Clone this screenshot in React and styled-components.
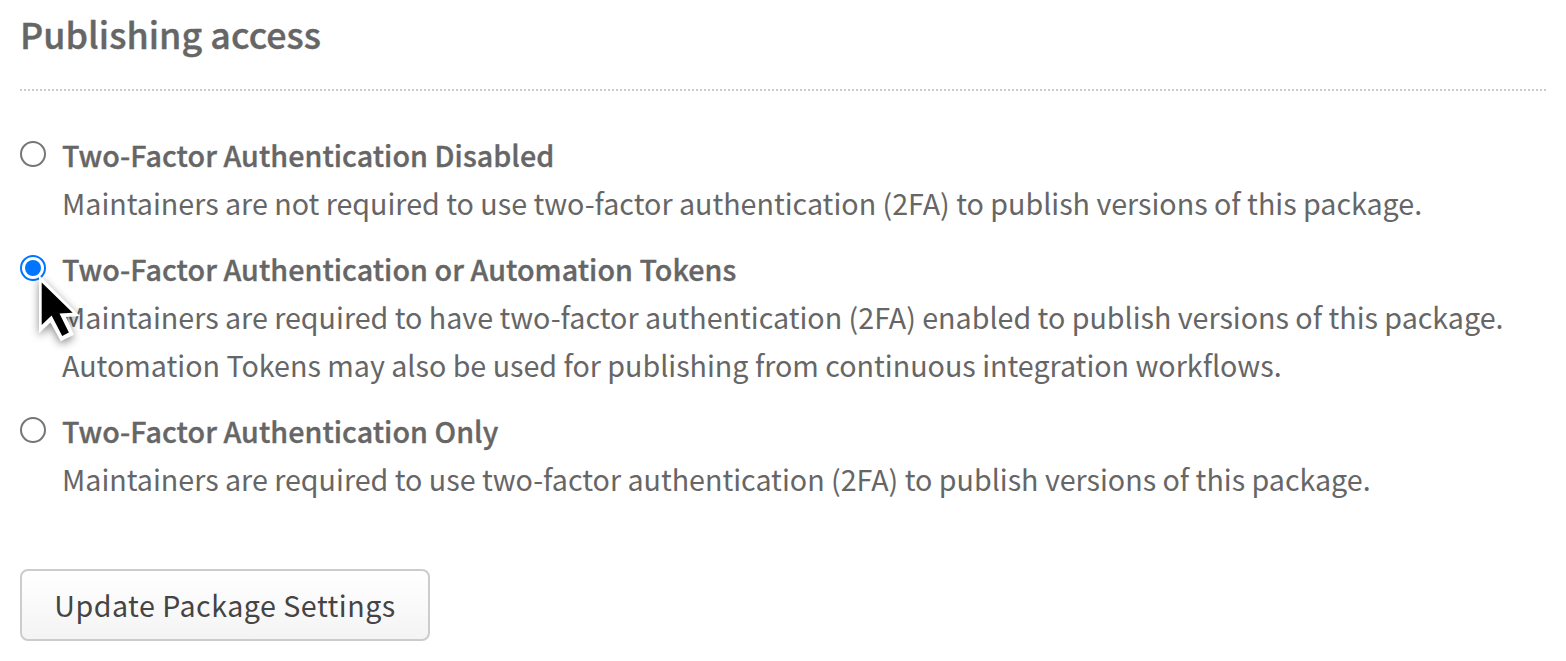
import React from 'react';
import styled, { createGlobalStyle } from 'styled-components';

const GlobalStyle = createGlobalStyle`
  * { box-sizing: border-box; }
  body {
    margin: 0;
    background: #fff;
    color: #666;
    font-family: 'Noto Sans CJK SC', sans-serif;
  }
`;

const Page = styled.main`
  height: 661px;
  padding: 1px 20px 0;
  overflow: hidden;
`;

const Title = styled.h2`
  margin: 0;
  height: 64px;
  font-size: 35.8px;
  line-height: 64px;
  font-weight: 500;
  letter-spacing: 0.06px;
  -webkit-text-stroke: 0.4px currentColor;
  white-space: nowrap;
`;

const Divider = styled.hr`
  margin: 24px 0 0;
  height: 2px;
  border: 0;
  border-top: 2px dotted #ccc;
`;

const Options = styled.div`
  display: flex;
  flex-direction: column;
  gap: 18px;
  padding-top: 40px;
`;

const Option = styled.label`
  display: grid;
  grid-template-columns: 26px 1fr;
  column-gap: 16px;
`;

const RadioHolder = styled.span`
  position: relative;
  width: 26px;
  height: 26px;
  margin-top: 10px;
`;

const Radio = styled.input`
  display: grid;
  place-content: center;
  appearance: none;
  margin: 0;
  width: 26px;
  height: 26px;
  border: 2px solid #767676;
  border-radius: 50%;
  background: #fff;

  &:checked { border-color: #0075ff; }
  &:checked::before {
    content: '';
    width: 16px;
    height: 16px;
    border-radius: 50%;
    background: #0075ff;
  }
`;

const Copy = styled.div`
  font-size: 28.655px;
  line-height: 48px;
  white-space: nowrap;
`;

const Label = styled.div`
  font-weight: 500;
  letter-spacing: 0.06px;
  -webkit-text-stroke: 0.35px currentColor;
`;

const Pointer = styled.svg`
  position: absolute;
  left: 18px;
  top: 19px;
  z-index: 2;
  overflow: visible;
  pointer-events: none;
  filter: drop-shadow(0 3px 4px rgba(0, 0, 0, 0.45));
`;

const UpdateButton = styled.button`
  display: flex;
  align-items: center;
  justify-content: center;
  width: 410px;
  height: 72px;
  margin-top: 66px;
  padding: 0;
  border: 2px solid #ccc;
  border-radius: 8px;
  background: linear-gradient(to bottom, #fff, #f4f4f4);
  color: #444;
  font: 400 28.64px/48px 'Noto Sans CJK SC', sans-serif;
  letter-spacing: 0.5px;
  white-space: nowrap;
`;

const OPTIONS = [
  {
    label: 'Two-Factor Authentication Disabled',
    lines: ['Maintainers are not required to use two-factor authentication (2FA) to publish versions of this package.'],
  },
  {
    label: 'Two-Factor Authentication or Automation Tokens',
    checked: true,
    lines: [
      'Maintainers are required to have two-factor authentication (2FA) enabled to publish versions of this package.',
      'Automation Tokens may also be used for publishing from continuous integration workflows.',
    ],
  },
  {
    label: 'Two-Factor Authentication Only',
    lines: ['Maintainers are required to use two-factor authentication (2FA) to publish versions of this package.'],
  },
];

export default function App() {
  return (
    <Page>
      <GlobalStyle />
      <Title>Publishing access</Title>
      <Divider />
      <Options>
        {OPTIONS.map((option) => (
          <Option key={option.label}>
            <RadioHolder>
              <Radio type="radio" name="access" defaultChecked={option.checked} />
              {option.checked && (
                <Pointer width="43" height="68" viewBox="0 0 43 68">
                  <path d="M1 1 V59.3 L12.5 48.5 L22.8 67.3 L36 60.7 L28 43 L42 42 Z" fill="#fff" />
                  <path d="M3.7 8.5 V51 L13.6 41.4 L24.2 62 L30.9 58.5 L21.5 39.4 L34.7 38.8 Z" fill="#000" />
                </Pointer>
              )}
            </RadioHolder>
            <Copy>
              <Label>{option.label}</Label>
              {option.lines.map((line) => <div key={line}>{line}</div>)}
            </Copy>
          </Option>
        ))}
      </Options>
      <UpdateButton type="button">Update Package Settings</UpdateButton>
    </Page>
  );
}
